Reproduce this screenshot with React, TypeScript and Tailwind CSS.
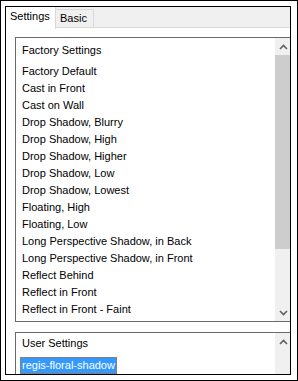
import React from "react";

const factoryItems = [
  "Factory Default",
  "Cast in Front",
  "Cast on Wall",
  "Drop Shadow, Blurry",
  "Drop Shadow, High",
  "Drop Shadow, Higher",
  "Drop Shadow, Low",
  "Drop Shadow, Lowest",
  "Floating, High",
  "Floating, Low",
  "Long Perspective Shadow, in Back",
  "Long Perspective Shadow, in Front",
  "Reflect Behind",
  "Reflect in Front",
  "Reflect in Front - Faint",
];

function Chevron({ down }: { down?: boolean }) {
  return (
    <svg width="9" height="6" viewBox="0 0 9 6" className={down ? "rotate-180" : ""}>
      <path d="M1 5 L4.5 1.5 L8 5" fill="none" stroke="#606060" strokeWidth="1.6" />
    </svg>
  );
}

export default function App() {
  return (
    <div
      className="w-[298px] h-[381px] bg-white border border-black pl-[4px] pt-[5px] pr-[6px] pb-[5px] text-[11px] text-black"
      style={{ fontFamily: '"Liberation Sans", Arial, sans-serif' }}
    >
      <div className="w-[286px] h-[369px] border border-black overflow-hidden flex flex-col bg-white">
        {/* Tab strip */}
        <div className="h-[21px] shrink-0 flex items-end bg-[#f0f0f0] border-b border-[#d9d9d9]">
          <div className="relative z-10 w-[50px] h-[22px] -mb-px self-start bg-white border-r border-[#d9d9d9] flex items-center pl-[4px] pb-[3px]">
            Settings
          </div>
          <div className="w-[38px] h-[18px] border-t border-r border-[#d9d9d9] bg-[#f0f0f0] flex items-center pl-[4px]">
            Basic
          </div>
        </div>

        {/* Tab page */}
        <div className="flex-1 pl-[9px] pt-[9px]">
          {/* Factory list */}
          <div className="w-[276px] h-[285px] border border-[#6a6a6a] flex">
            <div className="flex-1 pl-[4px] pt-[4px] overflow-hidden">
              <div className="h-[17px] flex items-center pl-[2px]">Factory Settings</div>
              <div className="mt-[4px]">
                {factoryItems.map((item) => (
                  <div key={item} className="h-[17px] flex items-center pl-[2px] whitespace-nowrap">
                    {item}
                  </div>
                ))}
              </div>
            </div>
            <div className="w-[16px] bg-[#f0f0f0] flex flex-col mr-[-1px]">
              <div className="h-[17px] flex items-center justify-center">
                <Chevron />
              </div>
              <div className="h-[194px] bg-[#cdcdcd]" />
              <div className="flex-1" />
              <div className="h-[17px] flex items-center justify-center">
                <Chevron down />
              </div>
            </div>
          </div>

          {/* User list */}
          <div className="mt-[10px] w-[276px] h-[80px] border border-[#6a6a6a] flex">
            <div className="flex-1 pl-[4px] pt-[2px] overflow-hidden">
              <div className="h-[17px] flex items-center pl-[2px]">User Settings</div>
              <div className="mt-[5px]">
                <div className="inline-flex h-[17px] items-center px-[1px] bg-[#3399ff] text-white border border-dotted border-[#cc6600]">
                  regis-floral-shadow
                </div>
              </div>
            </div>
            <div className="w-[16px] bg-[#f0f0f0] flex flex-col mr-[-1px]">
              <div className="h-[17px] flex items-center justify-center">
                <Chevron />
              </div>
            </div>
          </div>
        </div>
      </div>
    </div>
  );
}
